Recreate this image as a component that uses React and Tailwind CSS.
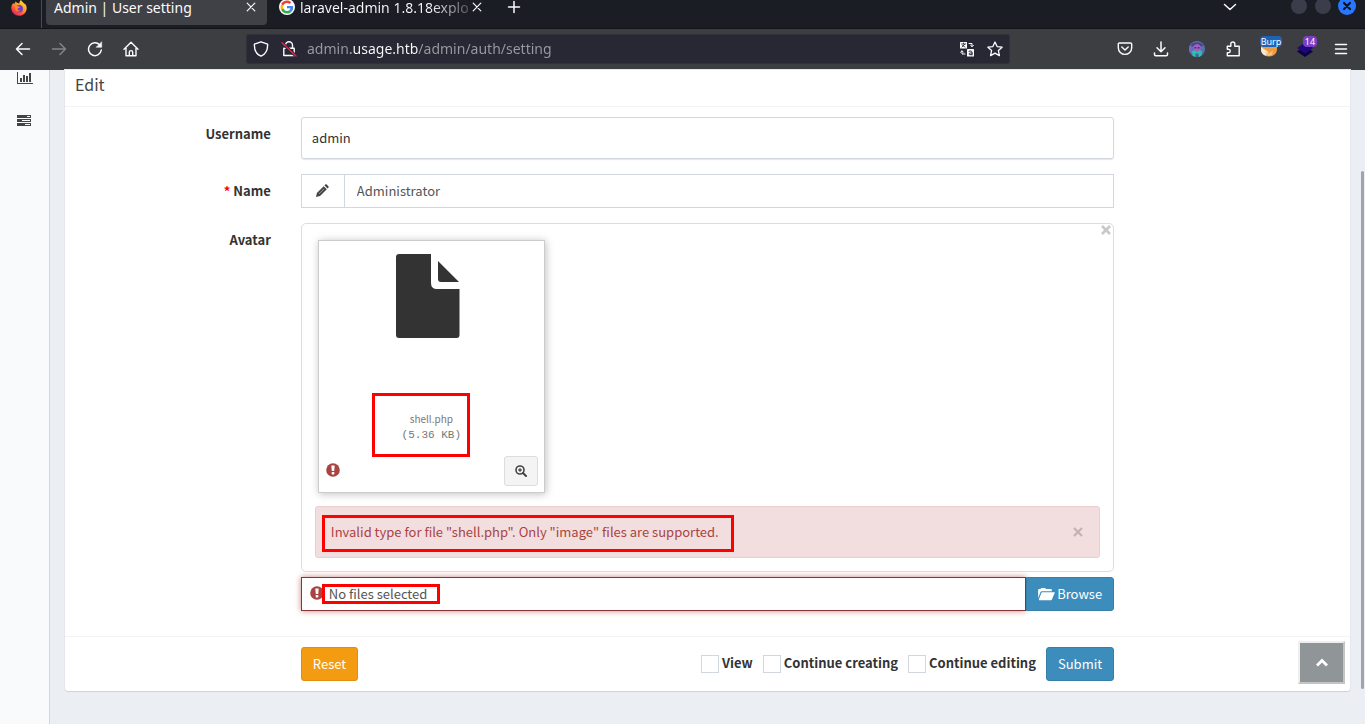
import React from "react";

function Glyph({ size = 16, box = "0 0 16 16", className = "", children }) {
  return (
    <svg
      width={size}
      height={size}
      viewBox={box}
      fill="none"
      stroke="currentColor"
      strokeWidth="1.5"
      strokeLinecap="round"
      strokeLinejoin="round"
      aria-hidden="true"
      className={"block shrink-0 " + className}
    >
      {children}
    </svg>
  );
}

const Close = ({ className }) => (
  <Glyph size={10} box="0 0 10 10" className={className}>
    <path d="M1.2 1.2l7.6 7.6M8.8 1.2L1.2 8.8" strokeWidth="1.2" />
  </Glyph>
);

const GoogleLogo = () => (
  <svg width="16" height="16" viewBox="0 0 48 48" className="block shrink-0" aria-hidden="true">
    <circle cx="24" cy="24" r="24" fill="#fff" />
    <g transform="translate(4.5 4.5) scale(0.81)">
      <path fill="#EA4335" d="M24 9.5c3.54 0 6.71 1.22 9.21 3.6l6.85-6.85C35.9 2.38 30.47 0 24 0 14.62 0 6.51 5.38 2.56 13.22l7.98 6.19C12.43 13.72 17.74 9.5 24 9.5z" />
      <path fill="#4285F4" d="M46.98 24.55c0-1.57-.15-3.09-.38-4.55H24v9.02h12.94c-.58 2.96-2.26 5.48-4.78 7.18l7.73 6c4.51-4.18 7.09-10.36 7.09-17.65z" />
      <path fill="#FBBC05" d="M10.53 28.59c-.48-1.45-.76-2.99-.76-4.59s.27-3.14.76-4.59l-7.98-6.19C.92 16.46 0 20.12 0 24c0 3.88.92 7.54 2.56 10.78l7.97-6.19z" />
      <path fill="#34A853" d="M24 48c6.48 0 11.93-2.13 15.89-5.81l-7.73-6c-2.15 1.45-4.92 2.3-8.16 2.3-6.26 0-11.57-4.22-13.47-9.91l-7.98 6.19C6.51 42.62 14.62 48 24 48z" />
    </g>
  </svg>
);

const FirefoxLogo = () => (
  <svg width="16" height="16" viewBox="0 0 16 16" className="block" aria-hidden="true">
    <defs>
      <linearGradient id="fox" x1="13" y1="1" x2="3" y2="15" gradientUnits="userSpaceOnUse">
        <stop offset="0" stopColor="#ffe03b" />
        <stop offset="0.4" stopColor="#ff9a2a" />
        <stop offset="0.75" stopColor="#ff4a3d" />
        <stop offset="1" stopColor="#e2157a" />
      </linearGradient>
    </defs>
    <path fill="url(#fox)" d="M2 3.2C.7 4.7.2 6.4.3 8.300.5 12.600 3.800 15.800 8 15.800s7.700-3.300 7.700-7.600c0-2-.9-4-2.100-5l.2 1.200C12.800 2.500 11 2.200 10 0 8.700 1 8.300 2.500 8.300 3.600 7.200 3.200 5.300 2.700 4.600 1.500c-.6.6-.6 1.500-.5 2.100-.8-.1-1.500 0-2.100-.4z" />
    <circle cx="8.200" cy="8.800" r="3.700" fill="#7139d8" />
    <path fill="#ff8a1f" d="M4 5.500c1.700-.4 2.800.3 3.400 1.100.7.100 1.400.2 1.400.7 0 .7-1.900.7-2.300 1.700 0 1.300 1.500 1.900 3.200 1.200-.8 1.700-4.200 2.200-5.300-.4C3.900 8.400 3.600 6.600 4 5.500z" />
  </svg>
);

function BrowserTabs() {
  return (
    <div className="flex h-[29px] items-start border-b border-[#121318] bg-[#1b1d24] text-[14px] leading-4 text-[#fbfbfe]">
      <button aria-label="Firefox View" className="h-7 w-[42px] shrink-0 border-r border-[#4b4c52] pl-[11px]">
        <span className="-mt-3 block">
          <FirefoxLogo />
        </span>
      </button>
      <div className="ml-1 flex h-[25px] w-[221px] shrink-0 items-start rounded-b bg-[#404146] pl-2 pr-[11px]">
        <span className="flex-1 whitespace-nowrap">Admin | User setting</span>
        <button aria-label="Close tab" className="pt-0.5">
          <Close />
        </button>
      </div>
      <div className="flex h-[25px] w-[221px] shrink-0 items-start pl-3 pr-[6px]">
        <span className="-mt-px mr-[5px]">
          <GoogleLogo />
        </span>
        <span className="flex-1 whitespace-nowrap bg-[linear-gradient(to_right,#fbfbfe_75%,#45474e_100%)] bg-clip-text text-transparent">
          laravel-admin 1.8.18explo
        </span>
        <button aria-label="Close tab" className="pt-0.5">
          <Close />
        </button>
      </div>
      <button aria-label="New tab" className="ml-[19px]">
        <Glyph size={14} box="0 0 14 14">
          <path d="M7 1.500v11M1.500 7h11" />
        </Glyph>
      </button>
      <button aria-label="List all tabs" className="ml-auto mr-[54px]">
        <Glyph size={14} box="0 0 14 14">
          <path d="M1.500 4.500L7 9.500l5.500-5" />
        </Glyph>
      </button>
      <div className="-mt-px flex items-center gap-2 pr-[9px]">
        <button aria-label="Minimize" className="-mt-0.5 size-4 rounded-full bg-[#3b3d4b]" />
        <button aria-label="Maximize" className="-mt-0.5 size-4 rounded-full bg-[#3b3d4b]" />
        <button aria-label="Close window" className="-ml-px -mt-0.5 flex size-[18px] items-center justify-center rounded-full bg-[#2777ff] text-[#11131a]">
          <Glyph size={10} box="0 0 10 10">
            <path d="M2 2l6 6M8 2L2 8" strokeWidth="2.2" />
          </Glyph>
        </button>
      </div>
    </div>
  );
}

function AddressBar() {
  return (
    <div className="flex h-[30px] w-[764px] items-center rounded bg-[#272833] pl-[7px] pr-[7px] text-[#fbfbfe] ring-1 ring-inset ring-[#303139]">
      <button aria-label="Tracking protection">
        <Glyph>
          <path d="M8 .8l6.600 2.400c.3 5.700-1.800 9.900-6.600 12C3.200 13.100 1.100 8.900 1.400 3.200z" strokeWidth="1.400" />
        </Glyph>
      </button>
      <button aria-label="Connection not secure" className="ml-3">
        <Glyph>
          <path d="M4.500 7V4.300a3.500 3.500 0 0 1 7 0V7M2.800 7.200h10.400v7.300H2.800z" strokeWidth="1.400" />
          <path d="M1.200 2.200l13.600 12.600" stroke="#272833" strokeWidth="3.200" />
          <path d="M1 1.800l14 13.200" stroke="#e22850" strokeWidth="1.300" />
        </Glyph>
      </button>
      <input
        aria-label="Address"
        defaultValue="admin.usage.htb/admin/auth/setting"
        className="ml-[10px] h-7 min-w-0 flex-1 bg-[linear-gradient(to_right,#9a9aa2_44px,#fbfbfe_44px,#fbfbfe_111px,#9a9aa2_111px)] bg-clip-text pb-0.5 text-[14px] text-transparent outline-none"
      />
      <div className="flex gap-3">
        <button aria-label="Translate this page">
          <Glyph>
            <rect x="1" y="1" width="7" height="6.500" rx="0.500" fill="#fbfbfe" stroke="none" />
            <path d="M2.500 3h4M4.500 2v1M3 6l3-3M3.500 4.500L6 6" stroke="#272833" strokeWidth="0.800" />
            <rect x="8" y="8" width="7" height="7.500" rx="0.500" fill="#fbfbfe" stroke="none" />
            <path d="M10 10.300c2-.8 3 0 3 1v2.700M13 12c-2-.3-3 .3-3 1s1.500 1.400 3 .1" stroke="#272833" strokeWidth="1" />
            <path d="M10 2.500h3v3M11.600 4.300L13 5.700l1.400-1.400M6 13H3v-3M1.600 11.200L3 9.800l1.400 1.400" strokeWidth="1" />
          </Glyph>
        </button>
        <button aria-label="Bookmark this page">
          <Glyph>
            <path d="M8 1l2.100 4.600 5 .6-3.700 3.400 1 5L8 12.100l-4.400 2.500 1-5L.9 6.200l5-.6z" strokeWidth="1.300" />
          </Glyph>
        </button>
      </div>
    </div>
  );
}

function ToolButton({ label, children }) {
  return (
    <button aria-label={label} className="relative flex h-8 w-9 items-center justify-center">
      {children}
    </button>
  );
}

function BrowserToolbar() {
  return (
    <div className="flex h-[41px] items-center bg-[#3d3e42] pb-px text-[#fbfbfe]">
      <div className="flex pl-[5px]">
        <ToolButton label="Back">
          <Glyph>
            <path d="M14.500 8H1.500M7 2.500L1.500 8 7 13.500" />
          </Glyph>
        </ToolButton>
        <ToolButton label="Forward">
          <Glyph className="text-[#83848a]">
            <path d="M1.500 8h13M9 2.500L14.500 8 9 13.500" />
          </Glyph>
        </ToolButton>
        <ToolButton label="Reload">
          <Glyph>
            <path d="M14.300 9A6.400 6.400 0 1 1 12.600 3.800" />
            <path d="M14.700 1v5.300H9.400z" fill="currentColor" strokeWidth="0.500" />
          </Glyph>
        </ToolButton>
        <ToolButton label="Home">
          <Glyph>
            <path d="M1 8.300L8 1.300l7 7M3 7v7.700h10V7M6.300 14.500v-3.200a1.700 1.700 0 0 1 3.400 0v3.200" strokeWidth="1.400" />
          </Glyph>
        </ToolButton>
      </div>
      <div className="flex flex-1 justify-center">
        <AddressBar />
      </div>
      <div className="flex items-center pr-[6px]">
        <ToolButton label="Save to Pocket">
          <Glyph>
            <path d="M2.500 2h11c.7 0 1.200.5 1.200 1.200v3.500a6.700 6.700 0 0 1-13.400 0V3.200C1.300 2.500 1.800 2 2.500 2zM4.800 6L8 9l3.200-3" strokeWidth="1.400" />
          </Glyph>
        </ToolButton>
        <ToolButton label="Downloads">
          <Glyph>
            <path d="M8 1v9.500M4 6.800l4 4 4-4M1.500 12v1.500c0 .8.500 1.200 1.200 1.200h10.600c.7 0 1.200-.4 1.200-1.200V12" />
          </Glyph>
        </ToolButton>
        <ToolButton label="Account">
          <svg width="16" height="16" viewBox="0 0 16 16" aria-hidden="true">
            <circle cx="8" cy="8" r="8" fill="#5b6fae" />
            <path d="M1.500 4.500C3.500 0 12.500 0 14.500 4.500L12 5.500 8 3 4 5.500z" fill="#47488a" />
            <circle cx="8" cy="6.800" r="3.600" fill="#a85cc4" />
            <path d="M5.500 6h1.800v1.500H5.500zM8.700 6h1.800v1.500H8.700z" fill="#4a2f75" />
            <path d="M3 10l2.500-.8L8 11l2.500-1.800L13 10l-.6 4.700A8 8 0 0 1 8 16a8 8 0 0 1-4.400-1.300z" fill="#27c4a8" />
            <path d="M6.500 12.500h3V16h-3z" fill="#4a5f9c" />
            <path d="M0 8c0-2 .6-3.500 1.500-4.500L3.500 9 1.500 12.500C.5 11 0 9.500 0 8z" fill="#7a65cf" />
          </svg>
        </ToolButton>
        <ToolButton label="Extensions">
          <Glyph>
            <path d="M2.300 5.200h3.500V3a2 2 0 0 1 4 0v2.200h4.400v9.600H2.300v-3h1.200a1.800 1.800 0 0 0 0-3.600H2.300z" strokeWidth="1.400" />
          </Glyph>
        </ToolButton>
        <ToolButton label="FoxyProxy">
          <svg width="18" height="16" viewBox="0 0 18 16" aria-hidden="true">
            <path d="M1 2l4 3h8l4-3v6.500c0 4-3.600 7-8 7s-8-3-8-7z" fill="#ef9a3c" />
            <path d="M1 6l7.500 5L6 14.800C3 14 1 11.500 1 9z" fill="#f9e7cf" />
            <path d="M5 10.500l3.500 2 4.500-3-1 4.500-4 1.200z" fill="#f5c084" />
          </svg>
          <span className="absolute left-[9px] top-[3px] h-[11px] w-[22px] rounded-sm bg-[#1f63b8] text-center text-[9px] leading-[11px] text-white">
            Burp
          </span>
        </ToolButton>
        <ToolButton label="Wappalyzer">
          <svg width="16" height="16" viewBox="0 0 16 16" aria-hidden="true">
            <path d="M8 5l8 5.500L8 16l-8-5.500z" fill="#0b0242" />
            <path d="M8 1.500l8 5.500-8 5.500L0 7z" fill="#22067c" />
          </svg>
          <span className="absolute left-4 top-[3px] h-[11px] w-[14px] rounded-sm bg-[#7a3fc4] text-center text-[9px] leading-[11px] text-white">
            14
          </span>
        </ToolButton>
        <ToolButton label="Open application menu">
          <Glyph>
            <path d="M2.500 3.500h11M2.500 8h11M2.500 12.500h11" />
          </Glyph>
        </ToolButton>
      </div>
    </div>
  );
}

function Sidebar() {
  return (
    <nav aria-label="Main" className="w-[50px] shrink-0 border-r border-[#d2d6de] bg-[#f9fafc] text-[#444]">
      <a href="#dashboard" aria-label="Dashboard" className="flex h-[29px] items-start pl-[17px] pt-0.5">
        <svg width="16" height="12" viewBox="0 0 16 12" fill="currentColor" aria-hidden="true">
          <path d="M0 0h1v11h15v1H0zM3 6h2v4H3zM6 3h2v7H6zM9 4h2v6H9zM12 1h2v9h-2z" />
        </svg>
      </a>
      <a href="#admin" aria-label="Admin" className="flex h-11 items-center pl-[17px]">
        <svg width="14" height="12" viewBox="0 0 14 12" fill="currentColor" fillRule="evenodd" aria-hidden="true">
          <path d="M0 0h14v3H0zM10 1v1h3V1zM0 4h14v3H0zM5 5v1h8V5zM0 8h14v3H0zM8 9v1h5V9z" />
        </svg>
      </a>
    </nav>
  );
}

const ErrorSign = () => (
  <svg width="14" height="14" viewBox="0 0 14 14" className="block shrink-0" aria-hidden="true">
    <circle cx="7" cy="7" r="6.800" fill="#a94442" />
    <path d="M5.300 2.500h3.400L8.200 8H5.800z" fill="#fff" />
    <rect x="5.700" y="9" width="2.600" height="2.400" rx="0.400" fill="#fff" />
  </svg>
);

const Mark = ({ className }) => (
  <span aria-hidden="true" className={"pointer-events-none absolute border-3 border-[#f00] " + className} />
);

function Row({ label, htmlFor, required, children }) {
  return (
    <div className="flex">
      <label htmlFor={htmlFor} className="w-1/6 shrink-0 pr-[15px] pt-[7px] text-right font-bold leading-5 text-[#333]">
        {required && <span className="text-[#f00]">* </span>}
        {label}
      </label>
      <div className="w-2/3 px-[15px]">{children}</div>
    </div>
  );
}

function FilePreview() {
  return (
    <div className="relative rounded-[5px] border border-[#ddd] px-[13px] pb-[13px] pt-4">
      <button type="button" aria-label="Remove" className="absolute right-[2px] top-[1px] text-[#c8c8c8]">
        <Glyph size={10} box="0 0 10 10">
          <path d="M1 1l8 8M9 1l-8 8" strokeWidth="2.600" strokeLinecap="butt" />
        </Glyph>
      </button>
      <figure className="relative ml-[3px] flex h-[253px] w-[227px] flex-col border border-[#ccc] bg-white px-[6px] pb-[6px] pt-[13px] shadow-[1px_1px_8px_rgba(0,0,0,0.25)]">
        <svg width="64" height="84" viewBox="0 0 64 84" fill="#333" className="ml-[71px] block" aria-hidden="true">
          <path d="M3 0H35V29Q35 35 41 35H63.500V81Q63.500 84 60.500 84H3Q0 84 0 81V3Q0 0 3 0Z" />
          <path d="M42 7L63 28H45Q42 28 42 25Z" />
        </svg>
        <figcaption className="mt-[73px] text-center text-[10px] leading-4 text-[#777]">
          <div>shell.php</div>
          <div className="font-['Liberation_Mono',monospace] text-[11px]">(5.36 KB)</div>
        </figcaption>
        <div className="mt-auto flex items-center justify-between">
          <span className="pb-0.5 pl-px">
            <ErrorSign />
          </span>
          <button type="button" aria-label="View details" className="flex h-[30px] w-[34px] items-center justify-center rounded-[3px] border border-[#ddd] bg-[#f4f4f4] text-[#444]">
            <Glyph size={12} box="0 0 12 12">
              <circle cx="5" cy="5" r="4" strokeWidth="1.600" />
              <path d="M3.300 5h3.400M5 3.300v3.400" strokeWidth="1.300" strokeLinecap="butt" />
              <path d="M8 8l3 3" strokeWidth="2" />
            </Glyph>
          </button>
        </div>
        <Mark className="left-[53px] top-[152px] h-16 w-[98px]" />
      </figure>
      <div role="alert" className="relative mt-[13px] flex h-[52px] items-center justify-between rounded-[3px] border border-[#ebccd1] bg-[#f2dede] pl-[15px] pr-4 text-[#a94442]">
        <span>Invalid type for file "shell.php". Only "image" files are supported.</span>
        <button type="button" aria-label="Close" className="text-[#c2b2b2]">
          <Glyph size={10} box="0 0 10 10">
            <path d="M1 1l8 8M9 1L1 9" strokeWidth="2.200" strokeLinecap="butt" />
          </Glyph>
        </button>
        <Mark className="left-[6px] top-[8px] h-[37px] w-[412px]" />
      </div>
    </div>
  );
}

function Check({ label }) {
  return (
    <label className="flex items-center gap-[3px] pb-[3px] font-bold text-[#333]">
      <input type="checkbox" className="mt-[3px] size-[18px] appearance-none border border-[#d2d6de] bg-white" />
      {label}
    </label>
  );
}

function EditForm() {
  return (
    <form
      onSubmit={(e) => e.preventDefault()}
      className="rounded-b-[3px] bg-white text-[13px] leading-5 text-[#333] shadow-[0_1px_1px_rgba(0,0,0,0.1),0_0_0_1px_#e6eaef]"
    >
      <h1 className="h-[37px] border-b border-[#f4f4f4] px-[10px] pt-[2px] text-[16px] leading-6 text-[#444]">Edit</h1>
      <div className="flex flex-col gap-[15px] px-[10px] pb-[25px] pt-[10px]">
        <Row label="Username" htmlFor="username">
          <input
            id="username"
            readOnly
            defaultValue="admin"
            className="block h-[42px] w-full rounded-[3px] border border-[#d2d6de] px-[10px] pb-0.5 shadow-[0_1px_1px_rgba(0,0,0,0.1)] outline-none"
          />
        </Row>
        <Row label="Name" htmlFor="name" required>
          <div className="flex h-[34px] border border-[#d2d6de]">
            <span className="flex w-[43px] items-center justify-center border-r border-[#d2d6de] pr-px text-[#444]">
              <svg width="14" height="14" viewBox="0 0 14 14" fill="currentColor" aria-hidden="true">
                <path d="M1 13l.9-4L8.700 2.200l3.100 3.100L5 12.100zM9.500 1.400l.8-.8c.4-.4 1-.4 1.400 0l1.700 1.700c.4.4.4 1 0 1.400l-.8.8z" />
                <path d="M4 9.800L9 4.900" stroke="#fff" strokeWidth="0.500" />
              </svg>
            </span>
            <input id="name" defaultValue="Administrator" className="min-w-0 flex-1 px-3 text-[#555] outline-none" />
          </div>
        </Row>
        <Row label="Avatar" htmlFor="avatar">
          <FilePreview />
          <div className="mt-[5px] flex h-[34px]">
            <div className="relative flex flex-1 items-center border border-[#843534] pl-2 shadow-[0_0_6px_#ce8483]">
              <span className="-mt-0.5">
                <ErrorSign />
              </span>
              <input id="avatar" readOnly defaultValue="No files selected" className="ml-[5px] h-full min-w-0 flex-1 pb-0.5 text-[#555] outline-none" />
              <Mark className="left-5 top-[6px] h-5 w-[118px]" />
            </div>
            <button type="button" className="relative flex items-center gap-[2px] rounded-r-[3px] border border-[#367fa9] bg-[#3c8dbc] px-[11px] text-white">
              <svg width="17" height="13" viewBox="0 0 18 14" fill="currentColor" aria-hidden="true">
                <path d="M0 11V2.500C0 1.700.5 1.200 1.200 1.200H2.500L3.500 0h4l1 1.200H13.500c.8 0 1.200.4 1.200 1.300V3.500H4.300C3.300 3.500 2.700 3.900 2.300 4.800z" />
                <path d="M4.300 4.500H17.500c.5 0 .6.300.4.700l-3.100 7.300c-.2.400-.5.600-1 .600H1.200c-.5 0-.6-.3-.4-.7L3.500 5c.2-.3.400-.5.800-.5z" />
              </svg>
              Browse
            </button>
          </div>
        </Row>
      </div>
      <div className="flex border-t border-[#f4f4f4] p-[10px]">
        <div className="w-1/6 shrink-0" />
        <div className="flex w-2/3 items-center gap-[10px] px-[15px]">
          <button type="reset" className="mr-auto h-[34px] rounded-[3px] border border-[#e08e0b] bg-[#f39c12] px-[11px] text-white">
            Reset
          </button>
          <Check label="View" />
          <Check label="Continue creating" />
          <Check label="Continue editing" />
          <button type="submit" className="h-[34px] rounded-[3px] border border-[#367fa9] bg-[#3c8dbc] px-[11px] text-white">
            Submit
          </button>
        </div>
      </div>
    </form>
  );
}

export default function App() {
  return (
    <div className="flex min-h-screen flex-col bg-[#ebeef3] font-['Noto_Sans',sans-serif]">
      <header>
        <BrowserTabs />
        <BrowserToolbar />
      </header>
      <div className="relative flex flex-1 font-['Noto_Sans_CJK_SC','Noto_Sans_CJK_JP',sans-serif]">
        <Sidebar />
        <main className="min-w-0 flex-1 pl-[15px] pr-[15px]">
          <EditForm />
        </main>
        <button
          type="button"
          aria-label="Back to top"
          className="absolute bottom-10 right-5 flex h-[43px] w-[47px] items-center justify-center border-2 border-b-[#c4c4c4] border-l-[#efefef] border-r-[#c4c4c4] border-t-[#efefef] bg-[#909597] text-white"
        >
          <Glyph size={14} box="0 0 14 14">
            <path d="M2 9.500l5-5 5 5" strokeWidth="2.800" strokeLinecap="butt" strokeLinejoin="miter" />
          </Glyph>
        </button>
        <div aria-hidden="true" className="absolute bottom-[35px] right-px top-[101px] w-[3px] rounded bg-[#a0a4a8]" />
      </div>
    </div>
  );
}
